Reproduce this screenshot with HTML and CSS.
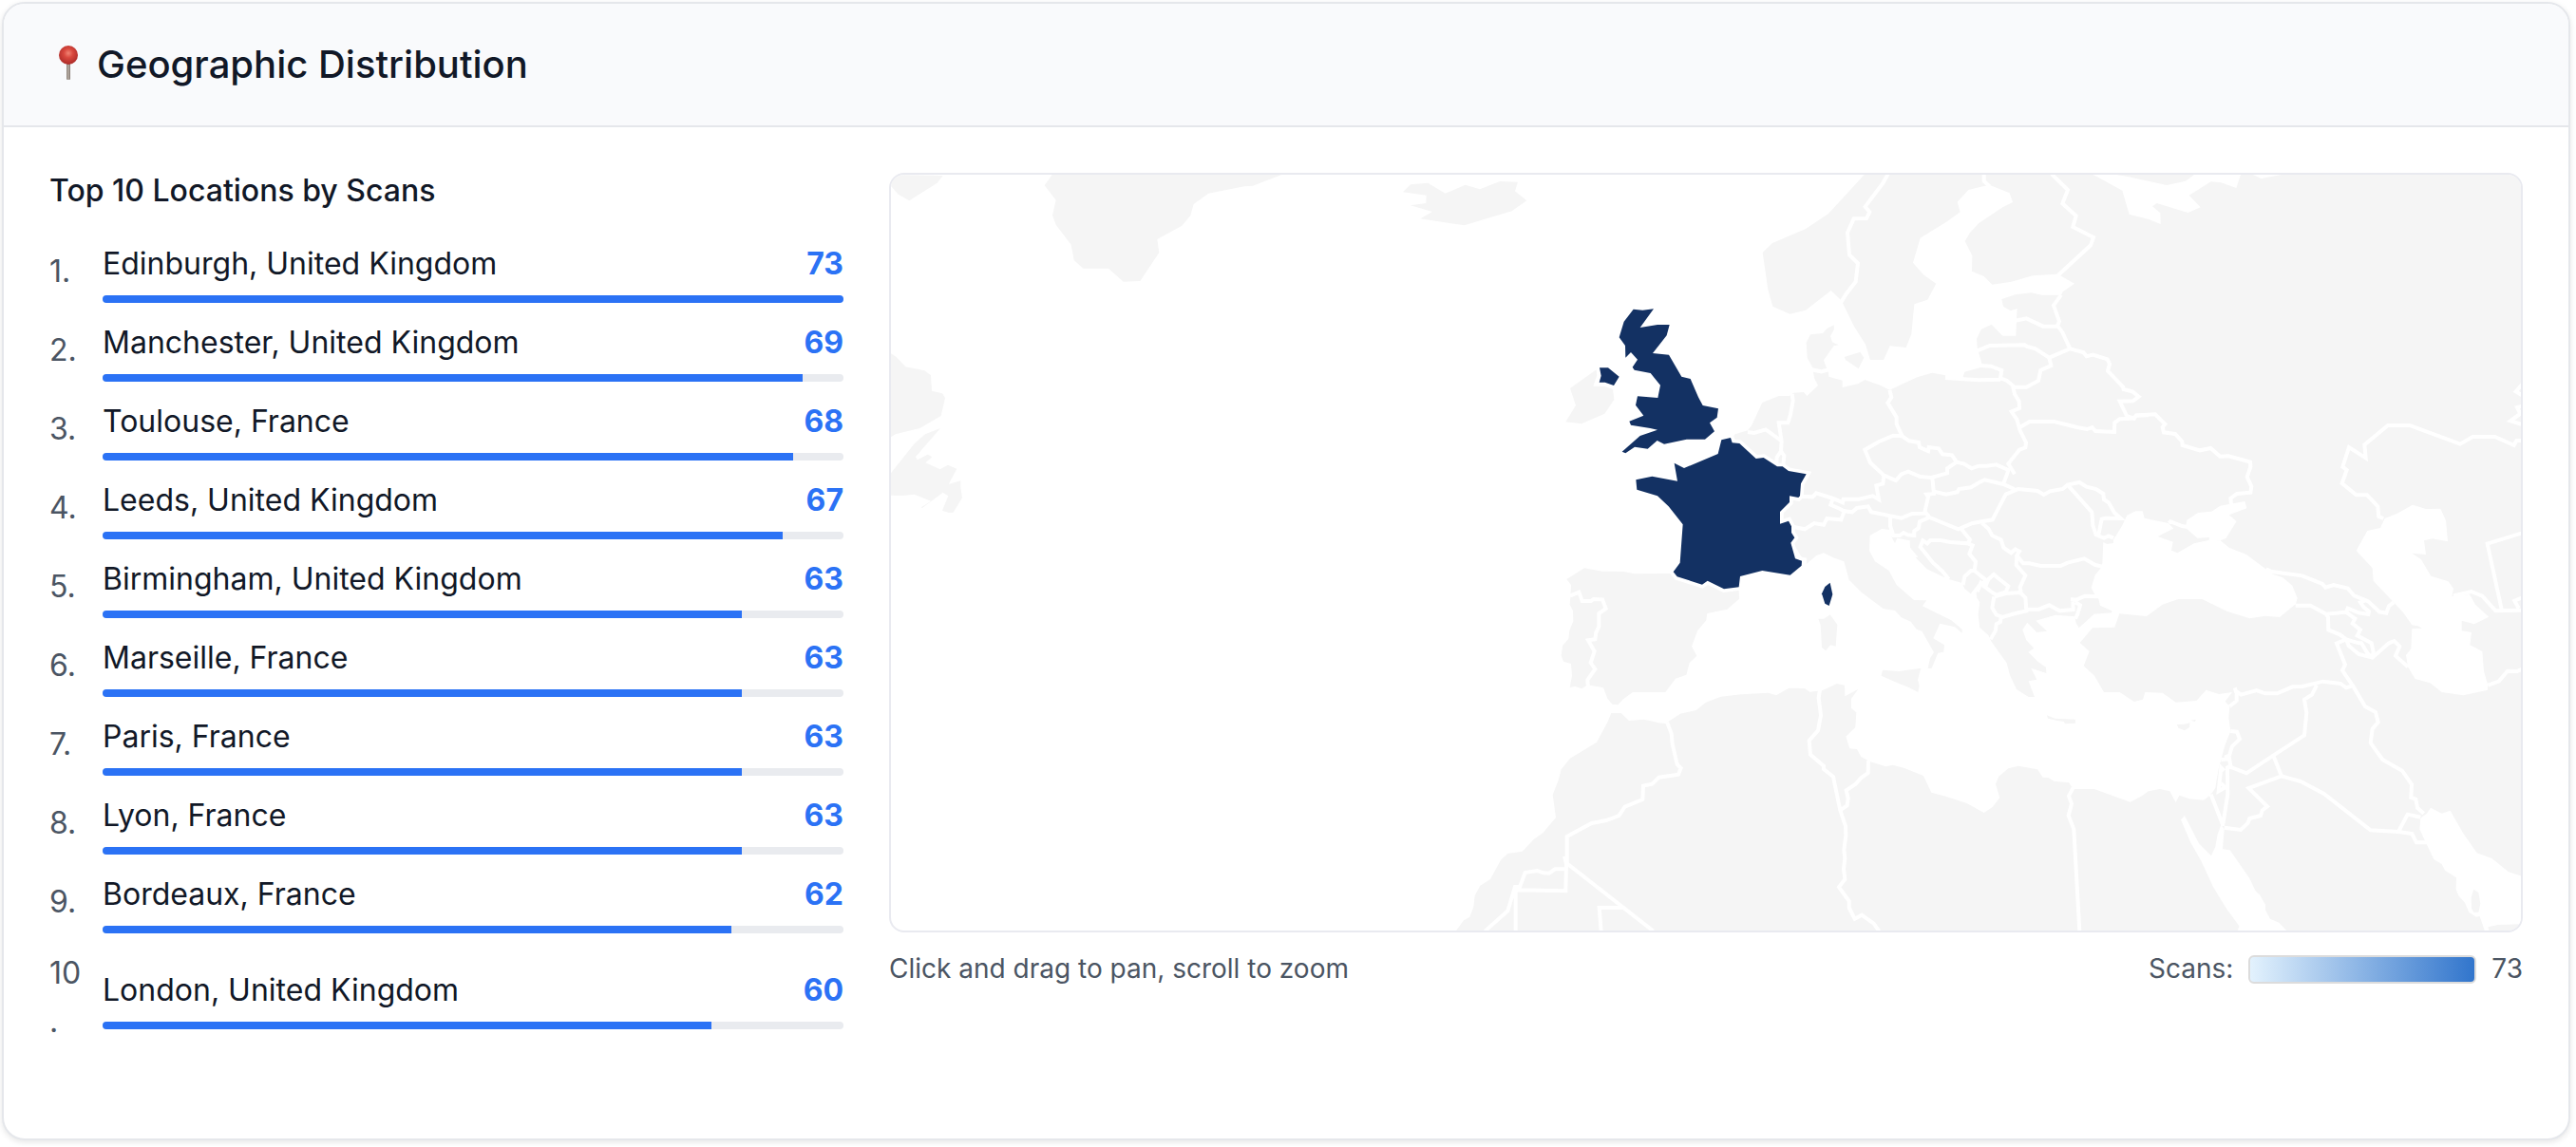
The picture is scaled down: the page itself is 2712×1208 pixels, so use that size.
FILE: index.html
```html
<!DOCTYPE html>
<html lang="en">
<head>
<meta charset="utf-8">
<title>Geographic Distribution</title>
<link rel="stylesheet" href="styles.css">
</head>
<body>
<section class="card">
  <header class="card-header">
    <h2 class="card-title">
      <svg class="pin" viewBox="0 0 40 40" aria-hidden="true">
        <defs>
          <radialGradient id="pin-ball" cx=".5" cy=".4" r=".6">
            <stop offset="0" stop-color="#f08474"/>
            <stop offset=".4" stop-color="#d9483e"/>
            <stop offset="1" stop-color="#ab2a28"/>
          </radialGradient>
          <linearGradient id="pin-needle" x1="0" x2="1" y1="0" y2="0">
            <stop offset="0" stop-color="#8b8078"/>
            <stop offset=".5" stop-color="#b9afa6"/>
            <stop offset="1" stop-color="#7d726b"/>
          </linearGradient>
        </defs>
        <rect x="18" y="17" width="4" height="19" rx="1" fill="url(#pin-needle)"/>
        <circle cx="20" cy="10" r="10" fill="url(#pin-ball)"/>
      </svg>
      <span>Geographic Distribution</span>
    </h2>
  </header>
  <div class="card-body">
    <section class="locations">
      <h3 class="locations-title">Top 10 Locations by Scans</h3>
      <ol class="location-list">
        <li class="location"><span class="rank">1.</span><div class="detail"><div class="line"><span>Edinburgh, United Kingdom</span><span class="count">73</span></div><div class="track"><div class="fill" style="width:100%"></div></div></div></li>
        <li class="location"><span class="rank">2.</span><div class="detail"><div class="line"><span>Manchester, United Kingdom</span><span class="count">69</span></div><div class="track"><div class="fill" style="width:94.52%"></div></div></div></li>
        <li class="location"><span class="rank">3.</span><div class="detail"><div class="line"><span>Toulouse, France</span><span class="count">68</span></div><div class="track"><div class="fill" style="width:93.15%"></div></div></div></li>
        <li class="location"><span class="rank">4.</span><div class="detail"><div class="line"><span>Leeds, United Kingdom</span><span class="count">67</span></div><div class="track"><div class="fill" style="width:91.78%"></div></div></div></li>
        <li class="location"><span class="rank">5.</span><div class="detail"><div class="line"><span>Birmingham, United Kingdom</span><span class="count">63</span></div><div class="track"><div class="fill" style="width:86.3%"></div></div></div></li>
        <li class="location"><span class="rank">6.</span><div class="detail"><div class="line"><span>Marseille, France</span><span class="count">63</span></div><div class="track"><div class="fill" style="width:86.3%"></div></div></div></li>
        <li class="location"><span class="rank">7.</span><div class="detail"><div class="line"><span>Paris, France</span><span class="count">63</span></div><div class="track"><div class="fill" style="width:86.3%"></div></div></div></li>
        <li class="location"><span class="rank">8.</span><div class="detail"><div class="line"><span>Lyon, France</span><span class="count">63</span></div><div class="track"><div class="fill" style="width:86.3%"></div></div></div></li>
        <li class="location"><span class="rank">9.</span><div class="detail"><div class="line"><span>Bordeaux, France</span><span class="count">62</span></div><div class="track"><div class="fill" style="width:84.93%"></div></div></div></li>
        <li class="location"><span class="rank">10.</span><div class="detail"><div class="line"><span>London, United Kingdom</span><span class="count">60</span></div><div class="track"><div class="fill" style="width:82.19%"></div></div></div></li>
      </ol>
    </section>
    <section class="map-panel">
      <div class="map-frame">
        <svg class="map" viewBox="0 0 1716 796" role="img" aria-label="Map of scans by country">
          <!-- land: each group uses thirds of a map unit -->
          <g class="land">
            <g transform="translate(-8 -14) scale(.333333)">
              <path d="M24 42L188 45L170 68L82 124L47 104L24 78Z"/>
              <path d="M533 42L509 76L545 122L534 170L545 200L593 263L602 312L631 338L711 338L758 380L811 378L871 288L865 246L943 203L970 171L980 135L1027 101L1140 79L1167 77L1258 42Z"/>
              <path d="M24 607L40 617L70 649L130 661L150 676L153 725L186 733L195 747L182 804L115 843L38 862L24 871Z"/>
              <path d="M24 985L98 892L132 862L180 843L102 933L107 943L140 926L154 934L133 952L179 973L204 959L232 971L206 1020L244 1009V1030L249 1063L221 1109L207 1110L186 1103L205 1057L188 1046L122 1096L120 1093L150 1073L98 1052L60 1056L24 1055Z"/>
            </g>
            <g transform="translate(442 -14) scale(.333333)">
              <path d="M291 97L315 73L370 68L425 101L488 74L534 88L597 63L654 65L645 94L682 124L635 157L485 202L346 181L384 159L315 139L364 132L365 107Z"/>
              <path d="M902 658L819 717L837 771L805 823L855 829L928 797L958 752L954 720L930 711L892 710L904 675Z"/>
            </g>
            <g transform="translate(882 -14) scale(.333333)">
              <path d="M428 42L315 165L243 213L138 258L107 288L124 405L139 458L193 482L243 470L323 408L352 436L360 448L395 520L432 578L447 627L489 627L509 583L560 588L577 545L586 451L628 437L655 386L615 358L582 320L605 242L690 190L731 160L722 128L757 90L806 78L825 75L887 100L897 129L865 145L790 195L762 225L746 252L769 298L768 347L806 363L832 389L893 380L960 361L1035 356L1050 362L1092 386L1055 412L1050 422L990 422L955 415L905 421L862 435L867 458L890 472L911 465L909 500L907 551L865 551L830 515L798 530L783 560L786 598L789 603L799 637L800 650L795 651L745 665L740 680L740 690L686 690L684 676L643 668L595 682L508 722L480 708L430 690L408 703L359 714L359 692L316 680L315 665L308 650L300 628L332 583L347 580L327 571L321 552L333 530L332 517L310 528L297 543L258 547L245 572L248 620L265 652L267 665L270 685L282 708L247 741L237 729L205 731L192 741L158 741L106 762L72 835L60 850L20 862L12 872L140 1000L160 1112L1330 1112V42Z"/>
              <path d="M365 618L415 602L427 620L410 655L370 628Z"/>
            </g>
            <path d="M1310 0H1716V370H1310Z"/>
            <g transform="translate(962 356) scale(.333333)"><path d="M860 0H2263V1322H860Z"/></g>
          </g>
          <!-- seas cut out of the eastern land mass -->
          <g class="sea">
            <g transform="translate(1302 -14) scale(.333333)">
              <path d="M0 48L123 75L183 62L210 42H357L343 84L295 67L263 64L194 107L230 145L191 162L92 132L78 142L103 163L104 198L67 183L5 167L-17 92L-97 48L-110 42H-35Z"/>
              <path d="M395 42L422 54L485 42Z"/>
              <path d="M187 1133L222 1110L265 1106L292 1088L370 1074L376 1096L320 1117L344 1137L311 1190L293 1198L257 1197L258 1188L220 1190L183 1158Z"/>
            </g>
            <g transform="translate(962 356) scale(.333333)">
              <path d="M850 0L1025 0L1045 -5L1067 -5L1073 17L1148 33L1165 50L1115 75L1163 92L1158 119L1177 127L1230 97L1278 86L1313 88L1340 110L1395 132L1455 177L1480 195L1510 205L1540 230L1556 270L1551 288L1500 330L1455 326L1405 334L1335 312L1255 273L1180 273L1130 290L1080 327L994 319L979 362L909 364L869 411L899 438L881 484L915 515L945 567L995 567L1040 597L1068 590L1075 567L1130 569L1172 599L1237 594L1268 560L1308 573L1350 567L1328 596L1342 612L1339 648L1345 690L1327 735L1315 780L1307 810L1300 850L1297 870L1280 893L1260 908L1215 904L1183 893L1172 915L1153 880L1122 873L1085 880L1065 895L1028 914L915 873L850 873Z"/>
            </g>
            <g transform="translate(1332 356) scale(.333333)">
              <path d="M90 957L78 970L108 1040L142 1100L180 1182L220 1248L262 1306L257 1322H414L388 1295L360 1283L345 1255L345 1238L328 1208L313 1194L295 1155L233 1066L210 1063L215 1000L205 985L193 1020L187 1055L174 1084L135 1045L112 1000Z"/>
              <path d="M835 965L855 950L867 932L902 950L929 941L970 1013L1013 1075L1060 1092L1113 1135L1153 1148V1300L1080 1302L1048 1309L1052 1322H1038L1022 1275L1010 1277L988 1262L975 1232L955 1210L947 1190L948 1153L912 1130L902 1110L877 1095L853 1045L832 1000Z"/>
              <path d="M632 120L667 57L708 48L722 18L760 3L810 -25L852 -12L898 -13L915 25L921 91L872 82L846 88L852 132L808 128L837 148L868 200L923 217L939 240L934 265L945 262L990 258L1008 290L1051 329L1005 352L965 341V373L996 378L991 418L1030 438L1035 500L1048 545L1047 560L970 577L902 567L865 538L818 525L795 487L789 450L805 430L808 366L840 365L825 357L808 355L780 315L750 283L686 215L683 175Z"/>
            </g>
          </g>
          <!-- southern Europe, north Africa and islands -->
          <g class="land">
            <g transform="translate(562 376) scale(.333333)">
              <path d="M448 150L504 115L560 125L628 126L662 133L775 132L880 150L992 182L993 212L955 245L892 258L889 280L862 312L843 362L859 392L836 415L826 452L792 464L760 507L657 507L628 528L610 547L592 545L577 527L564 493L521 485L511 486L496 496L475 489L458 492L465 455L462 417L438 410L431 392L435 360L454 338L457 312L469 283L468 250L458 230L461 190L462 168Z"/>
              <path d="M98 1262L123 1228L142 1217L154 1185L158 1150L175 1118L207 1098L240 1037L262 1017L308 1010L345 971L373 952L414 903L404 831L422 785L431 751L459 716L543 665L577 602L589 573L620 573L645 597L692 593L740 604L760 606L768 601L807 575L857 564L888 539L935 521L1000 514L1085 509L1110 517L1150 494L1200 495L1217 507L1242 505V1262Z"/>
            </g>
            <g transform="translate(962 356) scale(.333333)">
              <path d="M0 570L18 566L42 563L55 562L102 540L126 545L127 580L169 557L147 587L147 617L163 631L160 678L130 707L142 745L165 747L178 771L206 786L256 802L278 797L315 807L375 831L400 884L445 896L512 918L566 948L593 930L616 900L603 857L613 833L643 808L675 800L735 811L752 836L770 837L787 848L835 853L840 862L850 873H862V1322H0Z"/>
              <path d="M-80 0L-40 90L-10 140L7 143L5 163L37 135L60 127L90 142L124 154L140 212L180 252L248 303L285 309L305 331L335 344L353 368L370 374L408 441L396 460L389 492L401 491L421 443L439 440L441 418L406 397L427 350L474 361L497 380L497 368L463 340L372 295L385 277L345 276L290 228L266 183L222 154L204 120L206 72L243 51L272 54L276 80L285 96L292 80L332 88L333 110L358 140L350 142L386 178L433 200L455 210L497 222L505 240L527 258L541 250L544 270L553 283L548 322L553 363L580 387L590 408L638 475L648 513L669 558L707 582L726 582L707 532L733 527L715 491L763 507L762 488L738 472L706 440L724 428L700 403L688 370L703 347L733 378L765 374L730 341L792 323L853 328L857 348L866 364L914 320L970 316L970 310L933 293L928 272L916 258L905 237L917 197L935 175L940 160L943 93L955 99L975 96L975 85L985 70L1003 40L1018 8L1045 -5V-60H-80Z"/>
              <path d="M246 497L297 501L367 491L357 528L362 547L358 567L327 551L300 541L242 515Z"/>
              <path d="M43 335L60 335L80 322L103 353L98 422L82 418L66 436L54 425L50 355Z"/>
              <path d="M765 640L790 650L855 653V665L822 667L818 660L795 656L768 650Z"/>
              <path d="M1176 669L1197 668L1217 664L1215 678L1200 688L1180 680Z"/>
              <path d="M1220 656L1236 653L1232 660Z"/>
            </g>
            <path transform="translate(1332 356) scale(.333333)" d="M1003 1190L1018 1200L1024 1235L1018 1262L1003 1262L996 1250L995 1215Z"/>
          </g>
          <!-- country borders -->
          <g class="borders">
            <g transform="translate(882 -14) scale(.333333)">
              <path d="M503 40L488 67L431 143L445 160L435 180L395 181L375 225L381 295L408 322L401 380L370 420L355 445M806 40V62L825 80M1020 40L1071 90L1054 133L1097 172L1087 207L1152 240L1143 265L1040 360"/>
              <path d="M1050 422L1026 455L1044 505L1037 522M905 503L940 496L993 521H1040L1054 540L1078 592L1012 620L969 592L942 585L935 580L825 582L785 598"/>
              <path d="M1078 592L1120 603L1130 616L1150 611L1196 625L1203 640L1197 662L1245 712L1247 720L1275 727L1295 743L1277 757L1235 758L1260 810"/>
              <path d="M920 840L950 822H1028L1100 840L1132 846L1148 840L1158 852L1218 855L1219 825L1235 814L1280 812L1287 803L1325 802"/>
              <path d="M1012 620L1018 645L985 660L978 693L940 713H900M795 645L828 647L862 660L858 685L878 692L897 708L903 735L917 758L918 780L893 790L910 815L920 850L939 888L937 904L918 911L883 955L903 988M684 684L790 691L858 689"/>
              <path d="M508 722L514 745L502 763L530 808V830L548 868L570 883L600 888L603 903L630 915L632 903L663 907L675 925L705 928L720 950L742 955L767 970L790 962H815L845 958L883 975L880 985L867 1020"/>
              <path d="M548 868L520 866L475 885L430 911L447 952L490 992L528 1008L545 988L567 980L605 996L640 999L690 985V970L720 950"/>
              <path d="M490 992L487 1018L466 1024L474 1068L455 1057L410 1067H362L360 1078L330 1065L276 1048L265 1060L225 1058M205 1155L240 1162L270 1143L300 1148L310 1128L355 1132L365 1105L345 1095L322 1085L328 1068"/>
              <path d="M365 1105L390 1108L405 1095L440 1090L450 1108L545 1127L580 1113L618 1112L630 1060L625 1052L648 1050L643 1000M645 1042L687 1052L722 1045L727 1035L765 1030L790 1015L808 1006L867 1020L902 1035"/>
              <path d="M915 1035L875 1052L833 1132L770 1143L725 1162L635 1125L618 1105M895 1040L915 1035L975 1041L995 1053L1015 1042L1055 1035L1070 1022L1108 1014L1130 1028L1160 1035L1183 1050L1185 1068L1200 1078L1218 1110L1238 1128L1190 1127L1178 1130L1168 1180M1070 1022L1147 1108L1150 1150L1160 1180L1185 1190L1200 1183L1215 1190"/>
              <path d="M262 658L292 664L318 657M200 735L203 755L195 800L187 826H158L167 885L165 915L175 930L172 960M60 855L80 858L117 847L165 882M165 915L152 935L150 960"/>
            </g>
            <g transform="translate(1302 -14) scale(.333333)">
              <path d="M0 805L20 812L27 802L87 799L118 830L110 840L114 856L150 861L172 885L173 897L228 913L262 906L292 932L318 931L387 950L388 965L377 997L391 1027L388 1046L345 1050L325 1065L327 1085"/>
              <path d="M808 1128L793 1122L790 1090L756 1054H722L677 1017L692 975L679 965L699 903L752 937L748 895L822 834H891L1050 893L1090 870H1160L1220 897L1228 882H1246M1250 832L1209 820L1240 797L1230 777L1250 772M1250 700L1226 727L1250 742M130 1143L135 1138L172 1152L190 1155"/>
            </g>
            <g transform="translate(562 376) scale(.333333)">
              <path d="M458 203L487 191L497 219L525 219L533 213L561 214L572 243L550 258V300L541 318L538 340L516 343L536 378L524 414L538 434L514 468L516 492"/>
              <path d="M765 601L779 638L782 670L797 735L809 747L801 767L740 776L718 797L690 803L688 846L632 869L613 897L573 912L527 921L449 963V1048L722 1262M441 1025L447 1050L445 1135L290 1132M445 1065L411 1066L393 1079L375 1078L355 1071L317 1077L300 1122L285 1122L262 1198L190 1262M287 1125V1262M630 1188H551L557 1262"/>
            </g>
            <g transform="translate(962 356) scale(.333333)">
              <path d="M48 560L44 585L51 640L42 688L14 720L18 764L60 800V810L90 834L112 940L129 990L130 1020L124 1065L127 1092L123 1125L127 1158L108 1183L140 1227V1248L158 1283L180 1271L218 1298L235 1322M201 783L200 822L178 838L160 858L131 877L137 902L134 925L112 940M848 868L834 895L843 920L833 957L850 1000L868 1322"/>
              <path d="M270 15V42L280 72L300 72L312 63L325 70L346 72V58L360 48L363 28L397 13M495 52L522 85L515 97L460 93L430 87L397 87L387 97L373 88L365 108L405 158L435 185L455 210M515 97L530 103L520 130L540 155L536 183L525 183L505 202L500 228"/>
              <path d="M536 183L575 215L555 225L527 262M545 250L556 222L568 235M575 215L597 195L615 210L643 232L635 250L605 260L590 250L570 235L578 215M600 265L635 255L680 252L697 268L700 310L665 318L625 330L605 322L592 300L598 265M620 330L618 345L605 352L603 372L587 400"/>
              <path d="M560 33L580 50L592 72L620 85L628 110L652 127L665 115L678 122L670 135L690 160L710 160L745 168H808L830 158L883 145L918 165L940 170M670 135L668 165L697 198L680 235L683 252M700 305H740L772 292L805 310L848 306L847 280M840 273L858 275L885 263L930 265M855 283L870 292L862 320L855 335"/>
            </g>
            <g transform="translate(1332 356) scale(.333333)">
              <path d="M347 178L365 186L461 199L525 225L535 236L560 228L605 239L625 262L658 275L670 280L705 313L727 317L735 295L750 283M440 293H487L537 320L600 314L605 302L640 316L670 321L672 312L655 298L645 283L660 277"/>
              <path d="M537 320L543 330L544 370L580 385L600 400L570 413L597 480L588 498L622 548L660 612L693 630L701 662L683 683L677 727L715 780L777 815L807 858L805 900L820 905L825 932L845 950"/>
              <path d="M600 314L628 335L620 350L645 370L635 388L680 412L686 440L683 458M600 400L640 412L648 412L668 445L683 458M600 400L608 420L640 447L683 458L735 412L752 405L769 422L756 452L795 487"/>
              <path d="M232 612L254 594V565L268 575L317 561L345 571H382L431 550L462 549L527 533L582 540L600 553L622 546M248 553L254 570M507 545L492 575L468 590L475 632L468 703L370 767L285 823L240 805L225 803M370 767L396 832L292 870L351 928L335 940L330 957L295 966L290 980L267 1002L215 995"/>
              <path d="M396 832L457 849L530 888L677 1003L765 1008L808 1014L822 1042L858 1042M765 1008L794 953L835 962M235 690L255 692L264 715L240 738L230 770L235 800L225 805L226 890L210 990M205 780L225 778L220 765M173 890L210 985M215 815L205 805L197 880L218 868L205 855"/>
              <path d="M1048 545L1082 533L1110 500L1140 501L1156 494M939 262L995 249L1030 263L1072 310L1155 308M1156 64L1046 98L1091 305M1156 268L1132 278L1145 302"/>
            </g>
          </g>
          <!-- countries with scans -->
          <g class="active">
            <g transform="translate(682 116) scale(.333333)">
              <path d="M299 77L328 80L363 76L320 135L375 126L413 126L404 160L360 216L411 221L451 290L479 297L504 355L518 381L567 391L563 419L540 436L555 463L525 488L467 488L396 503L374 492L344 518L303 512L274 532L263 527L320 477L375 458L352 453L291 443L286 431L331 413L306 380L312 352L376 357L384 317L353 279L302 269L296 260L312 236L291 213L274 230L273 192L254 166L269 116Z"/>
              <path d="M192 262L219 262L254 290L237 318L209 308L191 308L197 287Z"/>
              <path d="M606 483L577 490L566 534L459 579L428 563L438 620L358 605L307 616L310 647L375 667L410 700L455 757L446 878L425 907L437 922L516 947L533 935L585 961L632 955L636 921L706 903L794 917L830 887L831 872L810 865L796 815L808 799L798 783L798 763L789 746L762 755V717L792 687V667L820 672L825 667L828 628L845 598L789 588L770 574L753 574L710 546L686 549L634 501L611 499Z"/>
            </g>
            <path transform="translate(962 356) scale(.333333)" d="M80 221L64 234L54 256L64 287L77 294L88 258Z"/>
          </g>
        </svg>
      </div>
      <footer class="map-footer">
        <span>Click and drag to pan, scroll to zoom</span>
        <div class="legend"><span>Scans:</span><span class="scale"></span><span>73</span></div>
      </footer>
    </section>
  </div>
</section>
</body>
</html>
```

FILE: styles.css
```css
* { box-sizing: border-box; }

body {
  margin: 0;
  padding: 2px 6px 6px 2px;
  background: #fff;
  color: #111827;
  font-family: Inter, "Liberation Sans", sans-serif;
  font-size: 32px;
  line-height: 51px;
}

h2, h3, ol { margin: 0; padding: 0; }

.card {
  border: 2px solid #e5e7eb;
  border-radius: 24px;
  background: #fff;
  box-shadow: 0 2px 6px rgba(0, 0, 0, .1);
  overflow: hidden;
}

.card-header {
  padding: 40px 48px;
  background: #f9fafc;
  border-bottom: 2px solid #e5e7eb;
}

.card-title {
  display: flex;
  align-items: center;
  gap: 10px;
  font-size: 40px;
  line-height: 48px;
  font-weight: 500;
}

.pin { width: 40px; height: 40px; }

.card-body {
  display: grid;
  grid-template-columns: repeat(12, minmax(0, 1fr));
  column-gap: 48px;
  padding: 48px 48px 98px;
}

.locations { grid-column: span 4; }
.map-panel { grid-column: span 8; }

.locations-title {
  margin-bottom: 32px;
  font-size: 32px;
  line-height: 38px;
  font-weight: 500;
}

.location-list {
  display: flex;
  flex-direction: column;
  gap: 16px;
  list-style: none;
}

.location {
  display: flex;
  align-items: center;
  gap: 16px;
}

.rank {
  flex: 0 0 40px;
  width: 40px;
  color: #4b5563;
  overflow-wrap: anywhere;
}

.detail { flex: 1; }

.line {
  display: flex;
  justify-content: space-between;
  margin-bottom: 8px;
}

.count {
  color: #2b72f5;
  font-weight: 700;
}

.track {
  height: 8px;
  border-radius: 4px;
  background: #e9ebef;
  overflow: hidden;
}

.fill {
  height: 100%;
  background: #2b72f5;
}

.map-frame {
  border: 2px solid #e9eaf0;
  border-radius: 16px;
  overflow: hidden;
}

.map {
  display: block;
  width: 100%;
  height: auto;
}

.land { fill: #f5f5f5; }
.sea { fill: #fff; }
.borders {
  fill: none;
  stroke: #fff;
  stroke-width: 12;
}
.active {
  fill: #133163;
  stroke: #fff;
  stroke-width: 22;
  paint-order: stroke;
}

.map-footer {
  display: flex;
  justify-content: space-between;
  align-items: center;
  margin-top: 16px;
  font-size: 28px;
  line-height: 45px;
  color: #4b5563;
}

.legend {
  display: flex;
  align-items: center;
  gap: 16px;
}

.scale {
  width: 240px;
  height: 30px;
  border: 2px solid #dcdcdc;
  border-radius: 6px;
  background: linear-gradient(to right, #e3f2fd, #3175cc);
}
```
